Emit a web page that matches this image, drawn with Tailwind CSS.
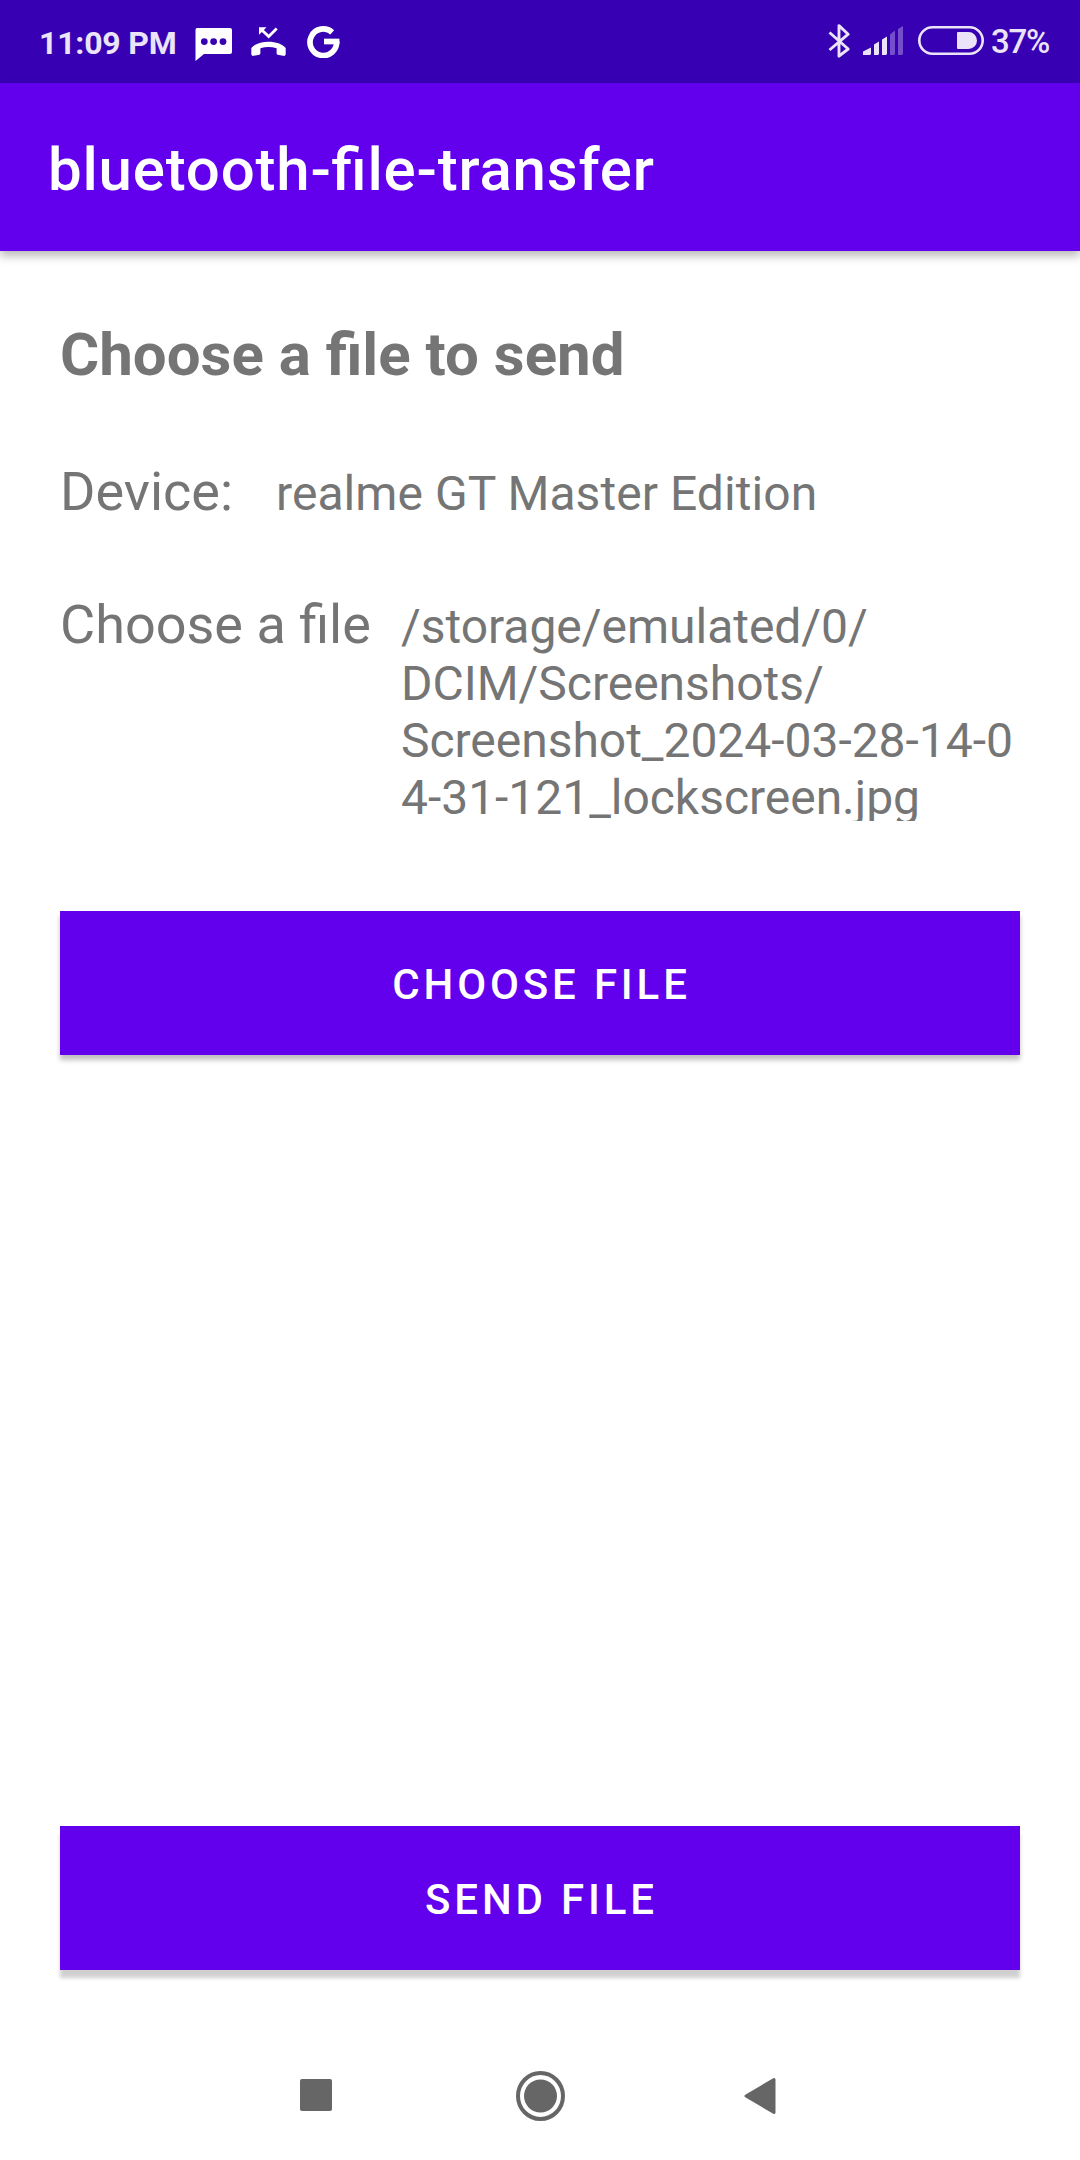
<!DOCTYPE html>
<html lang="en">
<head>
<meta charset="utf-8">
<title>bluetooth-file-transfer</title>
<script src="https://cdn.jsdelivr.net/npm/@tailwindcss/browser@4"></script>
</head>
<body class="w-[1080px] h-[2160px] overflow-hidden bg-white font-[Roboto,sans-serif] text-[#757575] flex flex-col">
  <div class="h-[83px] shrink-0 bg-[#3700b3] text-[#ebe3f8] flex items-start pl-[39px] pr-[30px]">
    <span class="w-[156px] mt-[24px] text-[32px] leading-[38px] font-bold tracking-[-0.200px] whitespace-nowrap">11:09 PM</span>
    <svg class="mt-[28px] w-[37px] h-[33px]" viewBox="0 0 37 33" fill="white"><path fill-rule="evenodd" d="M2 0H35Q37 0 37 2V24Q37 26 35 26H9L.5 33V2Q.5 0 2 0ZM9.300 10.200a3.400 3.400 0 1 0 .01 6.800a3.400 3.400 0 1 0-.01-6.800ZM18.600 10.200a3.400 3.400 0 1 0 .01 6.800a3.400 3.400 0 1 0-.01-6.800ZM28 10.200a3.400 3.400 0 1 0 .01 6.800a3.400 3.400 0 1 0-.01-6.800Z"/></svg>
    <svg class="mt-[26px] ml-[19px] w-[35px] h-[31px]" viewBox="0 0 35 31" fill="white"><path d="M.3 22C4 17.800 10 15.700 17.500 15.700S31 17.800 34.700 22V28.500L33.500 30L26.500 28.700L25.600 27.500V22.300Q17.500 19.500 9.400 22.300V27.500L8.500 28.700L1.500 30L.3 28.500Z"/><path d="M8 1.300H15.500L12.900 3.900L17.700 8.500L24.700 1.400L26.700 3.400L17.700 12.400L10.900 5.900L8 8.800Z"/></svg>
    <svg class="mt-[25px] ml-[21px] w-[33px] h-[33px]" viewBox="0 0 33 33" fill="none" stroke="white" stroke-width="5.700"><path d="M25.200 7.300A13.300 13.300 0 1 0 29.600 16.500"/><path d="M17 16.500H32.400"/></svg>
    <svg class="mt-[23px] ml-auto w-[24px] h-[36px]" viewBox="0 0 24 36" fill="none" stroke="currentColor" stroke-width="2.900" stroke-linejoin="round"><path d="M1.500 9.500L20.200 26L11 33.200V2.600L20.200 11.200L1.500 27"/></svg>
    <svg class="mt-[26px] ml-[11px] w-[40px] h-[29px]" viewBox="0 0 40 29" fill="currentColor"><path d="M0 29V25.500L8 21.500V28L7 29ZM11 29V18.500L16 15.500V28L15 29ZM19 29V13.500L24 10.500V28L23 29Z"/><path fill-opacity=".35" d="M27 29V8.500L32 4.500V28L31 29ZM35 29V3L40 0V28L39 29Z"/></svg>
    <svg class="mt-[26px] ml-[15px] w-[66px] h-[29px]" viewBox="0 0 66 29"><rect x="1.300" y="1.300" width="63.400" height="26.400" rx="13.200" fill="none" stroke="currentColor" stroke-width="2.600"/><path fill="currentColor" d="M40 6H50.500A8.500 8.500 0 0 1 50.500 23H40Q39 23 39 22V7Q39 6 40 6Z"/></svg>
    <span class="ml-[7px] mt-[22px] w-[59px] text-[33px] leading-[40px] font-medium tracking-[-1.200px] whitespace-nowrap">37%</span>
  </div>
  <header class="h-[168px] shrink-0 bg-[#6200ee] pl-[48px] pt-[52px] shadow-[0_5px_9px_rgba(0,0,0,0.28)]">
    <h1 class="text-[60px] leading-[70px] font-medium tracking-[0.800px] [font-feature-settings:'liga'_1] text-white whitespace-nowrap">bluetooth-file-transfer</h1>
  </header>
  <main class="flex-1 px-[60px] flex flex-col">
    <h2 class="mt-[69px] text-[60px] leading-[70px] font-bold whitespace-nowrap">Choose a file to send</h2>
    <div class="mt-[70px] flex items-baseline whitespace-nowrap">
      <span class="w-[216px] text-[54px] leading-[64px]">Device:</span>
      <span class="text-[48px] leading-[57px] tracking-[0.060px]">realme GT Master Edition</span>
    </div>
    <div class="mt-[69px] h-[228px] flex items-start whitespace-nowrap">
      <span class="w-[341px] text-[54px] leading-[64px]">Choose a file</span>
      <p class="mt-[5px] h-[223px] overflow-hidden text-[48px] leading-[57px] tracking-[-0.030px]">/storage/emulated/0/<br>DCIM/Screenshots/<br>Screenshot_2024-03-28-14-0<br>4-31-121_lockscreen.jpg</p>
    </div>
    <button class="mt-[90px] h-[144px] shrink-0 bg-[#6200ee] text-white text-[42px] leading-[50px] font-medium tracking-[3.850px] pt-[3px] pl-[3px] shadow-[0_5px_5px_rgba(0,0,0,0.25)]">CHOOSE FILE</button>
    <button class="mt-[771px] h-[144px] shrink-0 bg-[#6200ee] text-white text-[42px] leading-[50px] font-medium tracking-[3.850px] pt-[3px] pl-[3px] shadow-[0_8px_4px_rgba(0,0,0,0.19)]">SEND FILE</button>
  </main>
  <nav class="h-[130px] shrink-0 flex items-center pl-[300px]">
    <svg class="w-[32px] h-[32px]" viewBox="0 0 32 32"><rect width="32" height="32" rx="2" fill="#666"/></svg>
    <svg class="ml-[184px] mt-px w-[49px] h-[50px]" viewBox="0 0 49 50"><ellipse cx="24.500" cy="25" rx="22.500" ry="23" fill="none" stroke="#666" stroke-width="4"/><circle cx="24.500" cy="25" r="16.500" fill="#666"/></svg>
    <svg class="ml-[179px] mt-px w-[32px] h-[38px]" viewBox="0 0 32 38"><path d="M2 19L30 2.500V35.500Z" fill="#666" stroke="#666" stroke-width="3" stroke-linejoin="round"/></svg>
  </nav>
</body>
</html>
